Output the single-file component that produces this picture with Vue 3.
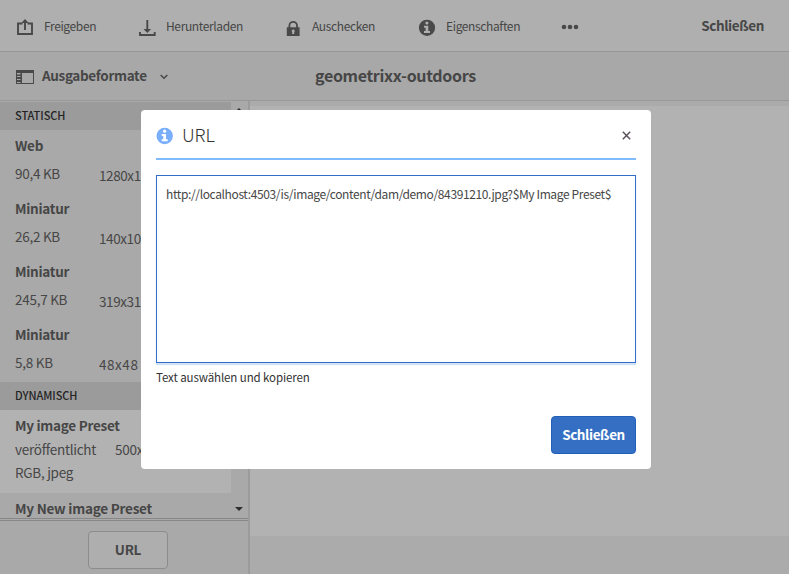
<script setup>
import { ref } from 'vue'

const url = ref('http://localhost:4503/is/image/content/dam/demo/84391210.jpg?$My Image Preset$')

const renditions = [
  { name: 'Web', size: '90,4 KB', dims: '1280x1280' },
  { name: 'Miniatur', size: '26,2 KB', dims: '140x100' },
  { name: 'Miniatur', size: '245,7 KB', dims: '319x319' },
  { name: 'Miniatur', size: '5,8 KB', dims: '48x48' },
]
</script>

<template>
  <div class="page">
    <header class="toolbar">
      <div class="action share">
        <svg width="18" height="18" viewBox="0 0 18 18">
          <path d="M6.500 5.500H2V16h14V5.500h-4.500M9 12V3" fill="none" stroke="#494949" stroke-width="1.900" />
          <path d="M9 1l3.700 4H5.300z" fill="#494949" />
        </svg>
        <span>Freigeben</span>
      </div>
      <div class="action download">
        <svg width="18" height="18" viewBox="0 0 18 18">
          <path d="M9.300 2v10M2 14v3h14.700v-3" fill="none" stroke="#494949" stroke-width="1.900" />
          <path d="M5.500 11h7.600l-3.800 4z" fill="#494949" />
        </svg>
        <span>Herunterladen</span>
      </div>
      <div class="action lock">
        <svg width="14" height="18" viewBox="0 0 14 18">
          <path d="M3.400 10V7.500a3.800 3.600 0 0 1 7.600 0V10" fill="none" stroke="#494949" stroke-width="1.800" />
          <path d="M.8 9.300h12.800V18H.8zM7.200 11.500a1.500 1.500 0 0 0-1 2.600V16h2v-1.900A1.500 1.500 0 0 0 7.200 11.500z" fill="#494949" fill-rule="evenodd" />
        </svg>
        <span>Auschecken</span>
      </div>
      <div class="action info">
        <svg width="18" height="18" viewBox="0 0 18 18">
          <circle cx="9" cy="9.800" r="8.100" fill="#494949" />
          <circle cx="8.900" cy="5" r="1.600" fill="#afafaf" />
          <path d="M6 7.800h4.300v5.300H12v2H6v-2h1.600V9.800H6z" fill="#afafaf" />
        </svg>
        <span>Eigenschaften</span>
      </div>
      <svg class="more" width="18" height="6" viewBox="0 0 18 6">
        <g fill="#494949"><circle cx="3" cy="3" r="2.300" /><circle cx="9" cy="3" r="2.300" /><circle cx="15" cy="3" r="2.300" /></g>
      </svg>
      <span class="close-page">Schließen</span>
    </header>

    <div class="titlebar">
      <svg class="rail" width="18" height="14" viewBox="0 0 18 14">
        <path d="M0 0h18v14H0zM6 3v10h11V3zM1 3v1.500h3.500V3zM1 6v1h3.500V6zM1 9v1h3.500V9zM1 12v1h3.500v-1z" fill="#494949" fill-rule="evenodd" />
      </svg>
      <span class="mode">Ausgabeformate</span>
      <svg class="chevron" width="8" height="6" viewBox="0 0 8 6">
        <path d="M.7 1l3.300 3.200L7.300 1" fill="none" stroke="#494949" stroke-width="1.600" />
      </svg>
      <h1>geometrixx-outdoors</h1>
    </div>

    <div class="content">
      <aside>
        <div class="scroller">
          <div class="list">
            <h2>STATISCH</h2>
            <div v-for="(item, i) in renditions" :key="i" class="rendition">
              <strong>{{ item.name }}</strong>
              <div class="meta">
                <span class="size">{{ item.size }}</span>
                <span class="dims" :class="{ short: item.dims.length < 6 }">{{ item.dims }}</span>
              </div>
            </div>
            <h2>DYNAMISCH</h2>
            <div class="preset selected">
              <strong>My image Preset</strong>
              <div class="status"><span>veröffentlicht</span><span>500x500</span></div>
              <div class="format">RGB, jpeg</div>
            </div>
            <div class="preset"><strong>My New image Preset</strong></div>
          </div>
          <div class="scrollbar">
            <svg width="8" height="4" viewBox="0 0 8 4"><path d="M0 4l4-4 4 4z" fill="#2e2e2e" /></svg>
            <svg width="8" height="4" viewBox="0 0 8 4"><path d="M0 0h8L4 4z" fill="#2e2e2e" /></svg>
          </div>
        </div>
        <footer><button class="url-button">URL</button></footer>
      </aside>
      <main><div class="preview"></div></main>
    </div>

    <section class="dialog">
      <div class="dialog-head">
        <svg class="dialog-info" width="18" height="18" viewBox="0 0 18 18">
          <circle cx="8.700" cy="9" r="8.200" fill="#78aefb" />
          <circle cx="8.600" cy="4.200" r="1.600" fill="#fff" />
          <path d="M5.700 7H10v5.300h1.700v2h-6v-2h1.600V9H5.700z" fill="#fff" />
        </svg>
        <span class="dialog-title">URL</span>
        <svg class="dismiss" width="9" height="9" viewBox="0 0 9 9">
          <path d="M.8.8l7.400 7.400M8.200.8L.8 8.200" stroke="#5a5259" stroke-width="1.500" />
        </svg>
      </div>
      <div class="url-field"><span>{{ url }}</span></div>
      <p>Text auswählen und kopieren</p>
      <button class="primary">Schließen</button>
    </section>
  </div>
</template>

<style>
body {
  margin: 0;
  overflow: hidden;
}
</style>

<style scoped>
.page {
  position: relative;
  display: flex;
  flex-direction: column;
  width: 789px;
  height: 574px;
  overflow: hidden;
  box-sizing: border-box;
  background: #a9a9a9;
  color: #464646;
  font-family: "Noto Sans CJK SC", "Noto Sans", sans-serif;
  font-size: 13.5px;
  letter-spacing: -0.27px;
  white-space: nowrap;
}
.page * {
  box-sizing: border-box;
}
svg {
  display: block;
  flex: none;
}
h1, h2, p {
  margin: 0;
}
button {
  font-family: inherit;
  letter-spacing: inherit;
  padding: 0 0 2px;
}
.toolbar {
  flex: none;
  display: flex;
  align-items: center;
  height: 52px;
  padding: 3px 25px 0 16px;
  background: #afafaf;
  border-bottom: 1px solid #979797;
}
.action {
  display: flex;
  align-items: center;
  font-size: 12px;
  letter-spacing: -0.37px;
  line-height: 20px;
}
.action span {
  margin-bottom: 2px;
}
.share { width: 122px; gap: 10px; }
.download { width: 148px; gap: 10px; }
.lock { width: 132px; gap: 12px; }
.info { width: 143px; gap: 10px; }
.close-page {
  margin: 0 0 5px auto;
  font-weight: 700;
  letter-spacing: -0.4px;
}
.titlebar {
  flex: none;
  display: flex;
  align-items: center;
  height: 49px;
  padding-left: 16px;
  background: #a8a8a8;
  border-bottom: 1px solid #989898;
}
.rail {
  margin-top: 2px;
}
.mode {
  width: 118px;
  margin: 0 0 2px 8px;
  font-weight: 700;
  letter-spacing: -0.33px;
}
.chevron {
  margin-top: 2px;
}
h1 {
  margin: 0 0 2px 147px;
  font-size: 16px;
  font-weight: 700;
  letter-spacing: -0.33px;
}
.content {
  flex: 1;
  min-height: 0;
  display: flex;
}
aside {
  display: flex;
  flex-direction: column;
  width: 250px;
  border-right: 2px solid #9b9b9b;
}
.scroller {
  display: flex;
  height: 418px;
  padding-top: 1px;
  border-bottom: 1px solid #878787;
}
.list {
  width: 231px;
  overflow: hidden;
}
h2 {
  height: 28px;
  padding-left: 15px;
  background: #9b9b9b;
  color: #232323;
  font-size: 11px;
  font-weight: 500;
  letter-spacing: -0.05px;
  line-height: 26px;
}
.rendition {
  height: 63px;
  padding: 5px 0 0 15px;
}
strong {
  display: block;
  line-height: 20px;
}
.meta {
  display: flex;
  margin-top: 8px;
  line-height: 20px;
}
.size {
  width: 84px;
}
.dims {
  padding-top: 2px;
  letter-spacing: -0.4px;
}
.dims.short {
  letter-spacing: 0.55px;
}
.preset {
  padding: 5px 0 0 15px;
  letter-spacing: -0.23px;
}
.selected {
  height: 83px;
  background: #b2b2b2;
  letter-spacing: -0.27px;
}
.status {
  display: flex;
  gap: 19px;
  margin-top: 4px;
  line-height: 20px;
}
.format {
  margin-top: 3px;
  line-height: 20px;
}
.scrollbar {
  display: flex;
  flex: 1;
  flex-direction: column;
  align-items: center;
  justify-content: space-between;
  padding: 6px 1px 7px 0;
  background: #a9a9a9;
}
footer {
  display: flex;
  flex: 1;
  justify-content: center;
  margin-top: 1px;
  padding: 10px 0 0 8px;
  border-top: 1px solid #878787;
}
.url-button {
  width: 80px;
  height: 38px;
  border: 1px solid #8c8c8c;
  border-radius: 4px;
  background: #aeaeae;
  color: #464646;
  font-size: 13.5px;
  font-weight: 700;
}
main {
  flex: 1;
  padding-top: 5px;
  background: #ababab;
}
.preview {
  height: 430px;
  background: #b2b2b2;
}
.dialog {
  position: absolute;
  top: 110px;
  left: 141px;
  display: flex;
  flex-direction: column;
  width: 510px;
  height: 359px;
  padding: 0 15px 15px;
  border-radius: 4px;
  background: #fff;
}
.dialog-head {
  display: flex;
  align-items: center;
  height: 50px;
  padding-top: 2px;
  border-bottom: 2px solid #80bbfb;
}
.dialog-info {
  margin-top: 2px;
}
.dialog-title {
  margin: -3px 0 0 8px;
  font-size: 18px;
  font-weight: 300;
  letter-spacing: -0.1px;
  color: #323232;
}
.dismiss {
  margin: 0 5px 0 auto;
}
.url-field {
  height: 188px;
  margin-top: 15px;
  padding: 8px 9px;
  border: 1px solid #326ec8;
  box-shadow: 0 2px 1px #d3e1f5;
  font-size: 12px;
  letter-spacing: -0.375px;
  line-height: 20px;
}
p {
  margin-top: 4px;
  font-size: 11.5px;
  letter-spacing: -0.1px;
  line-height: 20px;
  color: #323232;
}
.primary {
  width: 85px;
  height: 38px;
  margin: auto 0 0 auto;
  border: 1px solid #2160b8;
  border-radius: 4px;
  background: #356fc4;
  color: #fff;
  font-size: 13.5px;
  font-weight: 700;
  letter-spacing: -0.4px;
}
</style>
